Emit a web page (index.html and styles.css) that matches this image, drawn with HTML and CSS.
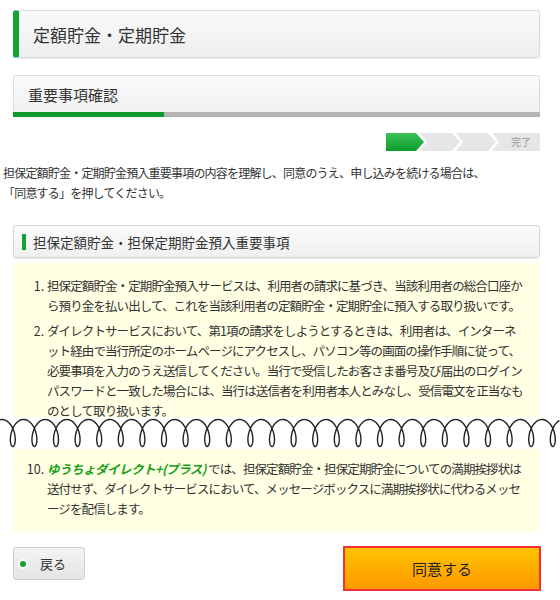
FILE: index.html
```html
<!DOCTYPE html>
<html lang="ja">
<head>
    <meta charset="UTF-8">
    <meta name="viewport" content="width=device-width, initial-scale=1.0">
    <title>定額貯金・定期貯金</title>
    <link rel="stylesheet" href="styles.css">
</head>
<body>

<div class="page">
    <h1 class="page-title">定額貯金・定期貯金</h1>

    <div class="step-title">
        <h2>重要事項確認</h2>
        <div class="step-bar"><span class="step-bar-fill"></span></div>
    </div>

    <div class="flow">
        <span class="flow-step current"></span>
        <span class="flow-step"></span>
        <span class="flow-step"></span>
        <span class="flow-step last">完了</span>
    </div>

    <p class="lead">担保定額貯金・定期貯金預入重要事項の内容を理解し、同意のうえ、申し込みを続ける場合は、<br>「同意する」を押してください。</p>

    <h3 class="section-title">担保定額貯金・担保定期貯金預入重要事項</h3>

    <div class="terms terms-top">
        <ol>
            <li>担保定額貯金・定期貯金預入サービスは、利用者の請求に基づき、当該利用者の総合口座から預り金を払い出して、これを当該利用者の定額貯金・定期貯金に預入する取り扱いです。</li>
            <li>ダイレクトサービスにおいて、第1項の請求をしようとするときは、利用者は、インターネット経由で当行所定のホームページにアクセスし、パソコン等の画面の操作手順に従って、必要事項を入力のうえ送信してください。当行で受信したお客さま番号及び届出のログインパスワードと一致した場合には、当行は送信者を利用者本人とみなし、受信電文を正当なものとして取り扱います。</li>
        </ol>
    </div>

    <div class="cut">
        <svg width="560" height="32" viewBox="0 0 560 32">
            <path id="coil" fill="none" stroke="#222" stroke-width="1.4" d=""/>
        </svg>
    </div>

    <div class="terms terms-bottom">
        <ol start="10">
            <li><em class="brand">ゆうちょダイレクト+(プラス)</em>では、担保定額貯金・担保定期貯金についての満期挨拶状は送付せず、ダイレクトサービスにおいて、メッセージボックスに満期挨拶状に代わるメッセージを配信します。</li>
        </ol>
    </div>

    <div class="actions">
        <button class="btn-back"><span class="dot"></span>戻る</button>
        <button class="btn-agree">同意する</button>
    </div>
</div>

<script>
    // 省略記号の波線
    const period = 21.6;
    const points = [];
    for (let t = -Math.PI; t <= 26 * 2 * Math.PI; t += 0.1) {
        const x = 2 + period * t / (2 * Math.PI) + 7 * Math.sin(t);
        const y = 16 - 13.5 * Math.cos(t);
        if (x > 560) break;
        points.push(x.toFixed(1) + ' ' + y.toFixed(1));
    }
    document.getElementById('coil').setAttribute('d', 'M' + points.join(' L'));
</script>

</body>
</html>
```

FILE: styles.css
```css
body {
    margin: 0;
    font-family: "Noto Sans CJK JP", sans-serif;
    color: #333;
    background-color: #fff;
}
.page {
    width: 560px;
    padding-top: 10px;
}
.page-title {
    margin: 0 20px 0 13px;
    height: 46px;
    padding-left: 14px;
    display: flex;
    align-items: center;
    font-size: 17px;
    font-weight: normal;
    color: #333;
    background: linear-gradient(#fafafa, #eeeeee);
    border: 1px solid #dcdcdc;
    border-left: 6px solid #13a23a;
    border-radius: 3px;
    box-shadow: 0 1px 1px rgba(0, 0, 0, 0.08);
}
.step-title {
    margin: 17px 20px 0 13px;
}
.step-title h2 {
    margin: 0;
    height: 36px;
    padding-left: 14px;
    display: flex;
    align-items: center;
    font-size: 15px;
    font-weight: normal;
    background: linear-gradient(#fbfbfb, #f1f1f1);
    border: 1px solid #dcdcdc;
    border-bottom: none;
    border-radius: 3px 3px 0 0;
}
.step-bar {
    height: 5px;
    background-color: #b3b3b3;
}
.step-bar-fill {
    display: block;
    width: 151px;
    height: 5px;
    background-color: #0d9a2a;
}
.flow {
    display: flex;
    justify-content: flex-end;
    margin: 16px 20px 0 0;
    height: 18px;
}
.flow-step {
    width: 40px;
    margin-left: -4px;
    background-color: #e6e6e6;
    clip-path: polygon(0 0, calc(100% - 8px) 0, 100% 50%, calc(100% - 8px) 100%, 0 100%, 7px 50%);
}
.flow-step.current {
    width: 38px;
    background: linear-gradient(#3cc258, #0c9c2c);
    clip-path: polygon(0 0, calc(100% - 8px) 0, 100% 50%, calc(100% - 8px) 100%, 0 100%);
}
.flow-step.last {
    width: 48px;
    padding-left: 10px;
    box-sizing: border-box;
    font-size: 10px;
    line-height: 18px;
    color: #999;
    text-align: center;
    clip-path: polygon(0 0, 100% 0, 100% 100%, 0 100%, 7px 50%);
}
.lead {
    margin: 12px 0 0 3px;
    font-size: 12px;
    letter-spacing: -0.8px;
    line-height: 20px;
}
.section-title {
    margin: 22px 20px 0 13px;
    height: 31px;
    display: flex;
    align-items: center;
    padding-left: 19px;
    position: relative;
    font-size: 13.5px;
    font-weight: normal;
    background: linear-gradient(#fbfbfb, #f0f0f0);
    border: 1px solid #d6d6d6;
    border-radius: 3px;
    box-shadow: 0 1px 1px rgba(0, 0, 0, 0.08);
}
.section-title::before {
    content: "";
    position: absolute;
    left: 8px;
    top: 8px;
    width: 4px;
    height: 16px;
    background-color: #13a23a;
}
.terms {
    margin: 0 20px 0 13px;
    background-color: #ffffe3;
    font-size: 12.5px;
    letter-spacing: -0.9px;
    line-height: 20px;
}
.terms ol {
    margin: 0;
    padding: 0 14px 0 34px;
}
.terms li {
    margin-bottom: 5px;
}
.terms li::marker {
    letter-spacing: 0;
}
.terms li:last-child {
    margin-bottom: 0;
}
.terms-top {
    margin-top: 5px;
    padding-top: 13px;
}
.cut {
    height: 32px;
    margin-top: -4px;
    background-color: #fff;
}
.cut svg {
    display: block;
}
.terms-bottom {
    padding: 10px 0 13px;
}
.brand {
    padding-right: 2px;
    font-weight: bold;
    letter-spacing: -0.5px;
    color: #1aa01a;
}
.actions {
    display: flex;
    justify-content: space-between;
    align-items: flex-start;
    margin: 14px 19px 0 13px;
}
button {
    font-family: "Noto Sans CJK JP", sans-serif;
    cursor: pointer;
}
.btn-back {
    display: flex;
    align-items: center;
    width: 72px;
    height: 33px;
    margin-top: 1px;
    padding: 0 0 0 6px;
    font-size: 13px;
    color: #333;
    background: linear-gradient(#f4f4f4, #e4e4e4);
    border: 1px solid #cfcfcf;
    border-radius: 3px;
}
.dot {
    width: 6px;
    height: 6px;
    margin-right: 14px;
    border-radius: 50%;
    background-color: #11a22f;
    box-shadow: 0 0 0 2px #fff;
}
.btn-agree {
    width: 198px;
    height: 45px;
    font-size: 15px;
    color: #222;
    background: linear-gradient(#ffc400, #ff9800);
    border: 2px solid #f0303c;
}
```
